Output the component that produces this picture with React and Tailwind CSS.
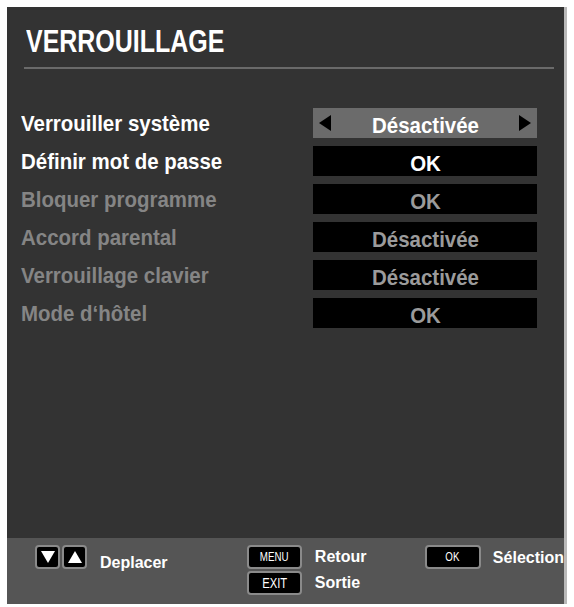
import React from 'react';

const rows = [
  { label: 'Verrouiller système', value: 'Désactivée', state: 'focus' },
  { label: 'Définir mot de passe', value: 'OK', state: 'on' },
  { label: 'Bloquer programme', value: 'OK', state: 'off' },
  { label: 'Accord parental', value: 'Désactivée', state: 'off' },
  { label: 'Verrouillage clavier', value: 'Désactivée', state: 'off' },
  { label: "Mode d‘hôtel", value: 'OK', state: 'off' },
];

const font = { fontFamily: '"Liberation Sans", Arial, sans-serif' };

function Key({ children, className = '' }) {
  return (
    <div className={`flex items-center justify-center bg-black rounded-[4px] border-2 border-[#8a8a8a] text-white ${className}`}>
      {children}
    </div>
  );
}

function Tri({ dir }) {
  return (
    <svg width="16" height="14" viewBox="0 0 16 14">
      {dir === 'up' ? <polygon points="8,1 15,13 1,13" fill="#fff" /> : <polygon points="1,1 15,1 8,13" fill="#fff" />}
    </svg>
  );
}

export default function App() {
  return (
    <div className="w-[574px] h-[607px] bg-white pt-[7px] pl-[7px]" style={font}>
      <div className="w-[560px] h-[597px] flex flex-col bg-[#333333] border-r-[3px] border-[#b9b9b9]">
        <div className="flex-1 flex flex-col">
          <h1 className="pl-[19px] pt-[18px] text-[32px] leading-[32px] font-bold text-white">
            <span className="inline-block scale-x-[0.78] origin-left">VERROUILLAGE</span>
          </h1>
          <div className="ml-[17px] mr-[10px] mt-[10px] h-[2px] bg-[#6a6a6a]" />
          <div className="mt-[39px] pl-[14px] pr-[27px] flex flex-col gap-[8px]">
            {rows.map((r) => {
              const labelColor = r.state === 'off' ? 'text-[#858585]' : 'text-white';
              const valueColor = r.state === 'off' ? 'text-[#9b9b9b]' : 'text-white';
              const box = r.state === 'focus' ? 'bg-[#6b6b6b]' : 'bg-black';
              return (
                <div key={r.label} className="flex items-center justify-between h-[30px]">
                  <span className={`text-[22px] font-bold inline-block scale-x-[0.93] origin-left ${labelColor}`}>{r.label}</span>
                  <div className={`w-[224px] h-[30px] flex items-center justify-between px-[5px] ${box}`}>
                    <span className="w-[14px] flex">
                      {r.state === 'focus' && (
                        <svg width="14" height="16" viewBox="0 0 14 16"><polygon points="13,0 13,16 1,8" fill="#000" /></svg>
                      )}
                    </span>
                    <span className={`text-[22px] font-bold pt-[4px] inline-block scale-x-[0.93] ${valueColor}`}>{r.value}</span>
                    <span className="w-[14px] flex">
                      {r.state === 'focus' && (
                        <svg width="14" height="16" viewBox="0 0 14 16"><polygon points="1,0 1,16 13,8" fill="#000" /></svg>
                      )}
                    </span>
                  </div>
                </div>
              );
            })}
          </div>
        </div>
        <div className="h-[66px] bg-[#555555] flex pt-[7px] text-white">
          <div className="flex items-start pl-[28px] w-[241px]">
            <Key className="w-[25px] h-[24px]"><Tri dir="down" /></Key>
            <Key className="w-[25px] h-[24px] ml-[2px]"><Tri dir="up" /></Key>
            <span className="ml-[13px] mt-[6px] text-[16px] font-bold">Deplacer</span>
          </div>
          <div className="flex flex-col gap-[2px] w-[179px]">
            <div className="flex items-center">
              <Key className="w-[55px] h-[24px] text-[13px]"><span className="inline-block scale-x-[0.75]">MENU</span></Key>
              <span className="ml-[13px] text-[16px] font-bold">Retour</span>
            </div>
            <div className="flex items-center">
              <Key className="w-[55px] h-[24px] text-[15px]"><span className="inline-block scale-x-[0.75]">EXIT</span></Key>
              <span className="ml-[13px] text-[16px] font-bold">Sortie</span>
            </div>
          </div>
          <div className="flex items-start">
            <Key className="w-[56px] h-[24px] text-[13px]"><span className="inline-block scale-x-[0.75]">OK</span></Key>
            <span className="ml-[12px] mt-[1px] text-[16px] font-bold">Sélection</span>
          </div>
        </div>
      </div>
    </div>
  );
}
